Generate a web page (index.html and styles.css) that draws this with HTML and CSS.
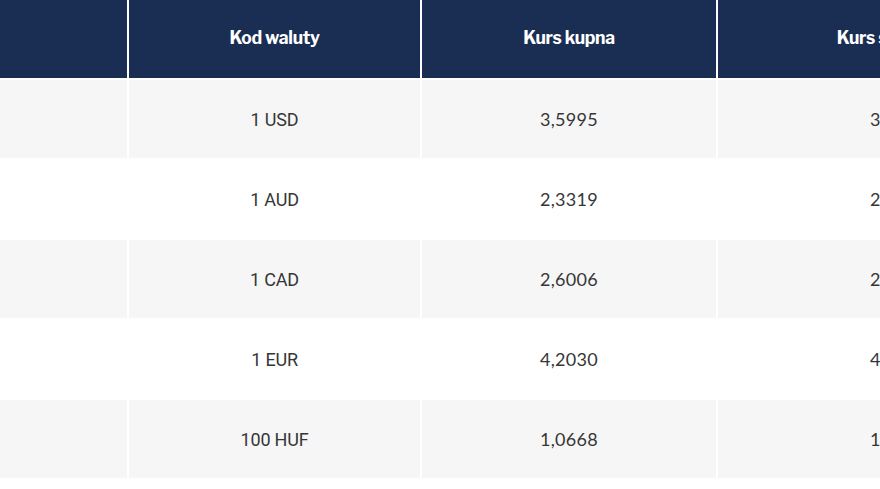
FILE: index.html
```html
<!DOCTYPE html>
<html lang="pl">
<head>
<meta charset="utf-8">
<link rel="stylesheet" href="styles.css">
</head>
<body>
<div class="wrap">
<table class="rates">
<colgroup><col class="c0"><col class="c1"><col class="c2"><col class="c3"></colgroup>
<thead>
<tr><th></th><th>Kod waluty</th><th>Kurs kupna</th><th>Kurs sprzedaży</th></tr>
</thead>
<tbody>
<tr><td></td><td class="code">1 USD</td><td class="num">3,5995</td><td class="num">3,6722</td></tr>
<tr><td></td><td class="code">1 AUD</td><td class="num">2,3319</td><td class="num">2,3791</td></tr>
<tr><td></td><td class="code">1 CAD</td><td class="num">2,6006</td><td class="num">2,6532</td></tr>
<tr><td></td><td class="code">1 EUR</td><td class="num">4,2030</td><td class="num">4,2880</td></tr>
<tr><td></td><td class="code">100 HUF</td><td class="num">1,0668</td><td class="num">1,0884</td></tr>
</tbody>
</table>
</div>
</body>
</html>
```
FILE: styles.css
```css
html, body {
  margin: 0;
  padding: 0;
  background: #ffffff;
  overflow: hidden;
  width: 880px;
  height: 489px;
}
.wrap {
  width: 880px;
  height: 489px;
  overflow: hidden;
}
.rates {
  border-collapse: separate;
  border-spacing: 2px;
  table-layout: fixed;
  width: 1124px;
  margin: -6px 0 0 -42px;
}
.c0 { width: 167px; }
.c1 { width: 291px; }
.c2 { width: 294px; }
.c3 { width: 362px; }
.rates th {
  height: 82px;
  padding: 0;
  background: #1a2e53;
  color: #ffffff;
  font-family: "Libre Franklin", "Inter", "Roboto", sans-serif;
  font-weight: 700;
  font-size: 17.5px;
  letter-spacing: -0.3px;
  text-align: center;
  vertical-align: middle;
}
.rates td {
  height: 78px;
  padding: 0;
  text-align: center;
  vertical-align: middle;
  color: #363636;
  font-size: 18px;
}
.rates tbody tr:nth-child(odd) td { background: #f6f6f6; }
.rates tbody tr:nth-child(even) td { background: #ffffff; }
.code {
  font-family: "Roboto", "Liberation Sans", sans-serif;
  letter-spacing: -0.2px;
}
.num {
  font-family: "Lato", "Open Sans", sans-serif;
  letter-spacing: 0.3px;
}
```
